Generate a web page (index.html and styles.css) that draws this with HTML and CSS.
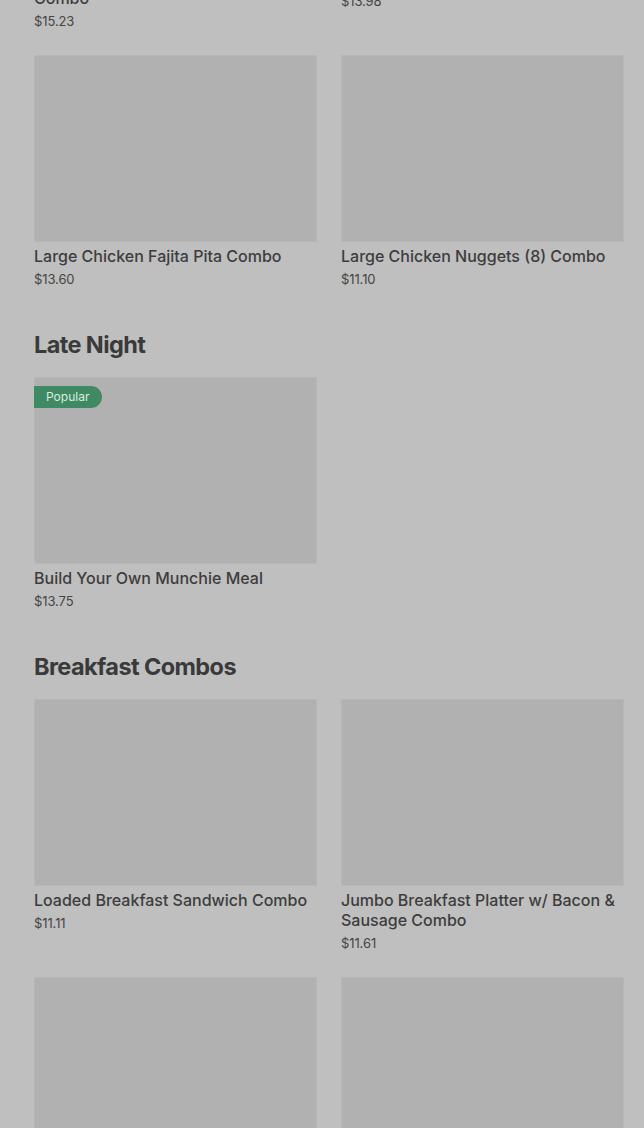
FILE: index.html
```html
<!DOCTYPE html>
<html>
<head>
<meta charset="utf-8">
<link rel="stylesheet" href="styles.css">
</head>
<body>
<main class="page">
  <section class="section first">
    <div class="grid">
      <div class="card">
        <div class="thumb"></div>
        <div class="title">Large Chicken Philly Cheesesteak Combo</div>
        <div class="price">$15.23</div>
      </div>
      <div class="card">
        <div class="thumb"></div>
        <div class="title">Large Gyro Pita Combo</div>
        <div class="price">$13.98</div>
      </div>
      <div class="card">
        <div class="thumb"></div>
        <div class="title">Large Chicken Fajita Pita Combo</div>
        <div class="price">$13.60</div>
      </div>
      <div class="card">
        <div class="thumb"></div>
        <div class="title">Large Chicken Nuggets (8) Combo</div>
        <div class="price">$11.10</div>
      </div>
    </div>
  </section>
  <section class="section">
    <h2 class="heading">Late Night</h2>
    <div class="grid">
      <div class="card">
        <div class="thumb"><span class="badge">Popular</span></div>
        <div class="title">Build Your Own Munchie Meal</div>
        <div class="price">$13.75</div>
      </div>
    </div>
  </section>
  <section class="section">
    <h2 class="heading">Breakfast Combos</h2>
    <div class="grid">
      <div class="card">
        <div class="thumb"></div>
        <div class="title">Loaded Breakfast Sandwich Combo</div>
        <div class="price">$11.11</div>
      </div>
      <div class="card">
        <div class="thumb"></div>
        <div class="title">Jumbo Breakfast Platter w/ Bacon &amp; Sausage Combo</div>
        <div class="price">$11.61</div>
      </div>
      <div class="card">
        <div class="thumb"></div>
        <div class="title">Breakfast Combo</div>
        <div class="price">$10.00</div>
      </div>
      <div class="card">
        <div class="thumb"></div>
        <div class="title">Breakfast Combo</div>
        <div class="price">$10.00</div>
      </div>
    </div>
  </section>
</main>
</body>
</html>
```
FILE: styles.css
```css
html, body {
  margin: 0;
  padding: 0;
  background: #bfbfbf;
  overflow: hidden;
}
body {
  font-family: Inter, "Noto Sans", sans-serif;
  color: #3c3c3c;
}
.page {
  padding: 0 20px 0 34px;
  height: 1128px;
  overflow: hidden;
}
.section.first {
  margin-top: -223px;
}
.section {
  padding-bottom: 14px;
}
.heading {
  margin: 26px 0 16px;
  font-size: 23.5px;
  line-height: 32px;
  font-weight: 700;
  letter-spacing: -0.6px;
  color: #3a3a3a;
}
.grid {
  display: grid;
  grid-template-columns: 283px 283px;
  column-gap: 24px;
  row-gap: 24px;
}
.card {
  display: flex;
  flex-direction: column;
}
.thumb {
  position: relative;
  height: 187px;
  box-sizing: border-box;
  background: #b1b1b1;
  border: 1px solid #b7b7b7;
}
.title {
  margin-top: 4px;
  font-size: 16px;
  line-height: 20px;
  font-weight: 500;
  letter-spacing: 0;
  color: #3d3d3d;
}
.price {
  margin-top: 3px;
  font-size: 13px;
  line-height: 20px;
  color: #454545;
  letter-spacing: -0.1px;
}
.badge {
  position: absolute;
  left: -1px;
  top: 8px;
  height: 22px;
  line-height: 22px;
  padding: 0 13px 0 12px;
  background: #3f8a63;
  color: #d9ece0;
  font-size: 12px;
  border-radius: 0 11px 11px 0;
}
```
